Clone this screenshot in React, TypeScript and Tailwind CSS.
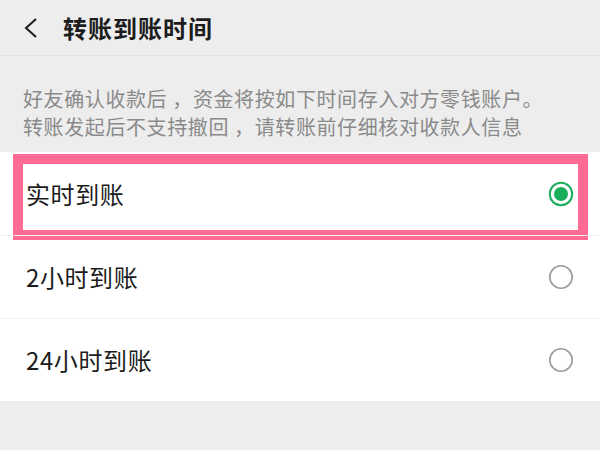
import React from 'react';

const options = [
  { label: '实时到账', selected: true },
  { label: '2小时到账', selected: false },
  { label: '24小时到账', selected: false },
];

const Radio = ({ selected }: { selected: boolean }) =>
  selected ? (
    <svg width="26" height="26" viewBox="0 0 26 26">
      <circle cx="13" cy="13" r="11.2" fill="none" stroke="#1aad5a" strokeWidth="2" />
      <circle cx="13" cy="13" r="7" fill="#1aad5a" />
    </svg>
  ) : (
    <svg width="26" height="26" viewBox="0 0 26 26">
      <circle cx="13" cy="13" r="11.2" fill="none" stroke="#9c9c9c" strokeWidth="1.6" />
    </svg>
  );

export default function App() {
  return (
    <div
      className="w-[600px] h-[450px] bg-[#ededed] overflow-hidden"
      style={{ fontFamily: '"Noto Sans CJK SC", "Noto Sans", sans-serif' }}
    >
      {/* Header */}
      <div className="h-[56px] flex items-center border-b border-[#e3e3e3]">
        <svg className="ml-[23px]" width="16" height="22" viewBox="0 0 16 22">
          <path d="M13 2 L3 11 L13 20" fill="none" stroke="#1c1c1c" strokeWidth="2" />
        </svg>
        <span className="ml-[24px] text-[24px] font-semibold tracking-[1px] text-[#1c1c1c] leading-none">
          转账到账时间
        </span>
      </div>

      {/* Notice */}
      <div className="h-[96px] pt-[29px] pl-[23px] text-[20px] tracking-[0.6px] leading-[28px] text-[#8a8a8a]">
        <p>好友确认收款后 ，资金将按如下时间存入对方零钱账户。</p>
        <p>转账发起后不支持撤回 ，请转账前仔细核对收款人信息</p>
      </div>

      {/* Options */}
      <div className="bg-white">
        {options.map((opt, i) => (
          <div
            key={opt.label}
            className={`relative h-[83px] flex items-center justify-between pl-[26px] pr-[26px] ${
              i > 0 ? 'border-t border-[#f2f2f2]' : ''
            }`}
          >
            <span className="text-[24px] tracking-[0.6px] text-[#1c1c1c] leading-none">{opt.label}</span>
            <Radio selected={opt.selected} />
            {opt.selected && (
              <div className="absolute left-[13px] right-[12px] top-[2px] h-[86px] border-[10px] border-[#ff6b94] pointer-events-none" />
            )}
          </div>
        ))}
      </div>
    </div>
  );
}
